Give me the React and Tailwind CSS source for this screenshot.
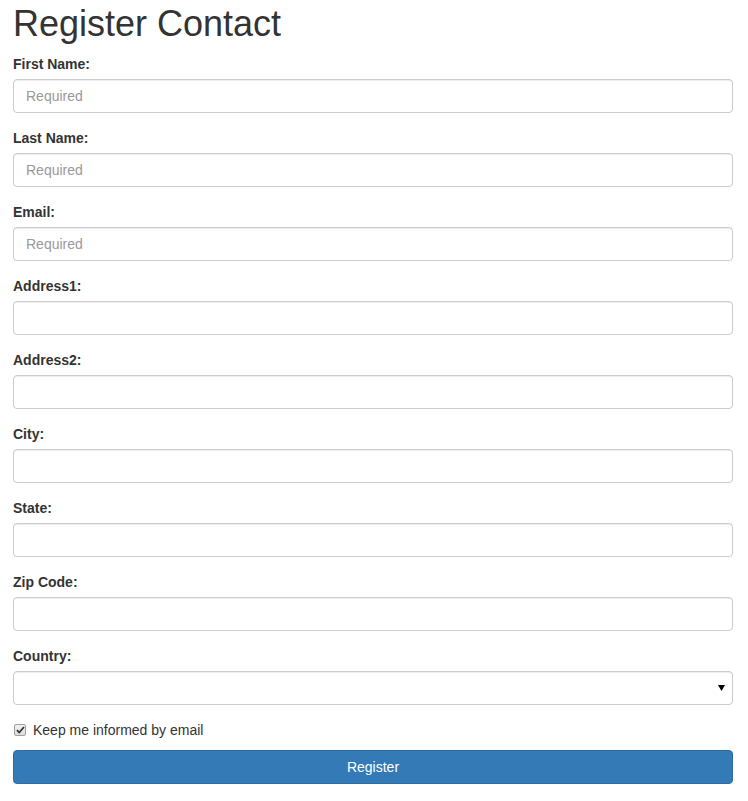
import { useState } from "react";

const fields = [
  { id: "firstName", label: "First Name:", placeholder: "Required" },
  { id: "lastName", label: "Last Name:", placeholder: "Required" },
  { id: "email", label: "Email:", placeholder: "Required" },
  { id: "address1", label: "Address1:" },
  { id: "address2", label: "Address2:" },
  { id: "city", label: "City:" },
  { id: "state", label: "State:" },
  { id: "zip", label: "Zip Code:" },
];

const inputClass =
  "block w-full h-[34px] px-3 py-[6px] text-[14px] leading-[20px] text-[#555] bg-white border border-[#ccc] rounded-[4px] shadow-[inset_0_1px_1px_rgba(0,0,0,0.075)] placeholder:text-[#999] outline-none focus:border-[#66afe9]";

const App = () => {
  const [keepInformed, setKeepInformed] = useState(true);

  return (
    <div
      className="pl-[13px] pr-[15px] text-[14px] leading-[20px] text-[#333] bg-white min-h-screen"
      style={{ fontFamily: '"Liberation Sans", Arial, sans-serif' }}
    >
      <h1 className="pt-[4px] mb-[10px] text-[36px] leading-[1.1] font-normal">
        Register Contact
      </h1>
      <form onSubmit={(e) => e.preventDefault()}>
        {fields.map((f) => (
          <div key={f.id} className="mb-[15px]">
            <label htmlFor={f.id} className="block mb-[5px] font-bold">
              {f.label}
            </label>
            <input id={f.id} type="text" placeholder={f.placeholder} className={inputClass} />
          </div>
        ))}

        <div className="mb-[15px]">
          <label htmlFor="country" className="block mb-[5px] font-bold">
            Country:
          </label>
          <div className="relative">
            <select id="country" className={inputClass + " appearance-none pr-8"}>
              <option value=""></option>
            </select>
            <svg
              className="absolute right-[8px] top-[14px] pointer-events-none"
              width="7"
              height="6"
              viewBox="0 0 7 6"
            >
              <path d="M0 0h7L3.5 6z" fill="#000" />
            </svg>
          </div>
        </div>

        <label className="flex items-center h-[20px] mb-[10px] cursor-pointer">
          <input
            type="checkbox"
            checked={keepInformed}
            onChange={(e) => setKeepInformed(e.target.checked)}
            className="sr-only"
          />
          <span className="flex items-center justify-center w-[12px] h-[12px] ml-[1px] rounded-[2px] border border-[#a0a0a0] bg-gradient-to-b from-[#f0f0f0] to-[#dcdcdc]">
            {keepInformed && (
              <svg width="9" height="8" viewBox="0 0 9 8">
                <path d="M1 4.2l2.2 2.3L8 1" fill="none" stroke="#333" strokeWidth="1.8" />
              </svg>
            )}
          </span>
          <span className="ml-[7px] font-normal">Keep me informed by email</span>
        </label>

        <button
          type="submit"
          className="block w-full h-[34px] px-3 text-[14px] text-white bg-[#337ab7] border border-[#2e6da4] rounded-[4px] hover:bg-[#286090]"
        >
          Register
        </button>
      </form>
    </div>
  );
};

export default App;
